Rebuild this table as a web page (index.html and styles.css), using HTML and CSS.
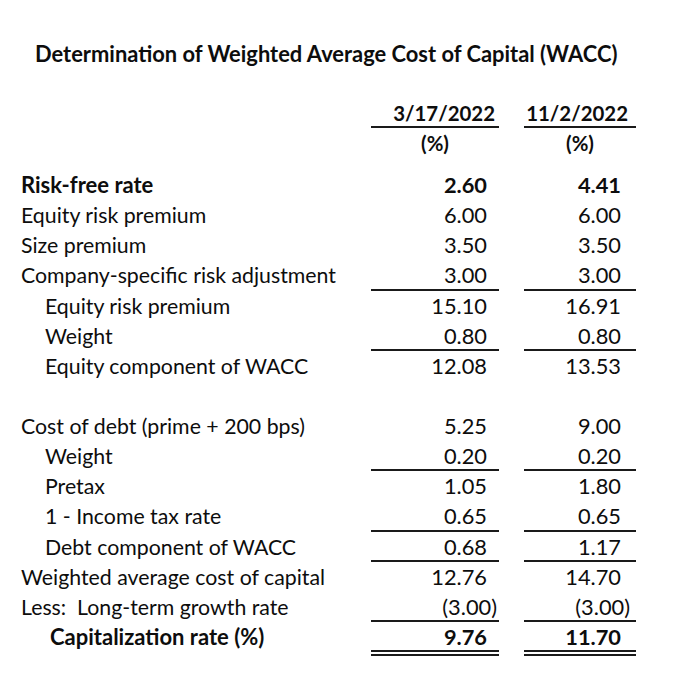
FILE: index.html
```html
<!DOCTYPE html>
<html>
<head>
<meta charset="utf-8">
<link rel="stylesheet" href="styles.css">
</head>
<body>
<div class="sheet">
  <h1 class="title">Determination of Weighted Average Cost of Capital (WACC)</h1>
  <div class="table">
    <div class="row head">
      <div class="label"></div>
      <div class="c1 date u">3/17/2022</div>
      <div class="c2 date u">11/2/2022</div>
    </div>
    <div class="row head pct">
      <div class="label"></div>
      <div class="c1 center">(%)</div>
      <div class="c2 center">(%)</div>
    </div>
    <div class="row bold">
      <div class="label">Risk-free rate</div>
      <div class="c1 num">2.60</div>
      <div class="c2 num">4.41</div>
    </div>
    <div class="row">
      <div class="label">Equity risk premium</div>
      <div class="c1 num">6.00</div>
      <div class="c2 num">6.00</div>
    </div>
    <div class="row">
      <div class="label">Size premium</div>
      <div class="c1 num">3.50</div>
      <div class="c2 num">3.50</div>
    </div>
    <div class="row">
      <div class="label">Company-specific risk adjustment</div>
      <div class="c1 num u">3.00</div>
      <div class="c2 num u">3.00</div>
    </div>
    <div class="row">
      <div class="label ind">Equity risk premium</div>
      <div class="c1 num">15.10</div>
      <div class="c2 num">16.91</div>
    </div>
    <div class="row">
      <div class="label ind">Weight</div>
      <div class="c1 num u">0.80</div>
      <div class="c2 num u">0.80</div>
    </div>
    <div class="row">
      <div class="label ind">Equity component of WACC</div>
      <div class="c1 num">12.08</div>
      <div class="c2 num">13.53</div>
    </div>
    <div class="row blank"></div>
    <div class="row">
      <div class="label">Cost of debt (prime + 200 bps)</div>
      <div class="c1 num">5.25</div>
      <div class="c2 num">9.00</div>
    </div>
    <div class="row">
      <div class="label ind">Weight</div>
      <div class="c1 num u">0.20</div>
      <div class="c2 num u">0.20</div>
    </div>
    <div class="row">
      <div class="label ind">Pretax</div>
      <div class="c1 num">1.05</div>
      <div class="c2 num">1.80</div>
    </div>
    <div class="row">
      <div class="label ind">1 - Income tax rate</div>
      <div class="c1 num u">0.65</div>
      <div class="c2 num u">0.65</div>
    </div>
    <div class="row">
      <div class="label ind">Debt component of WACC</div>
      <div class="c1 num u">0.68</div>
      <div class="c2 num u">1.17</div>
    </div>
    <div class="row">
      <div class="label">Weighted average cost of capital</div>
      <div class="c1 num">12.76</div>
      <div class="c2 num">14.70</div>
    </div>
    <div class="row">
      <div class="label">Less:&nbsp; Long-term growth rate</div>
      <div class="c1 num neg u">(3.00)</div>
      <div class="c2 num neg u">(3.00)</div>
    </div>
    <div class="row bold total">
      <div class="label ind2">Capitalization rate (%)</div>
      <div class="c1 num uu">9.76</div>
      <div class="c2 num uu">11.70</div>
    </div>
  </div>
</div>
</body>
</html>
```

FILE: styles.css
```css
html, body {
  margin: 0;
  padding: 0;
  background: #ffffff;
}

body {
  font-family: Lato, "Liberation Sans", sans-serif;
  color: #0d0d0d;
}

.sheet {
  padding-top: 39px;
}

.title {
  margin: 0;
  padding-left: 35px;
  font-size: 21.9px;
  font-weight: 700;
  line-height: 30px;
  height: 30px;
  white-space: nowrap;
}

.table {
  margin-top: 29px;
  padding-left: 21px;
}

.row {
  display: flex;
  height: 30.13px;
  line-height: 30.13px;
  font-size: 21.3px;
}

.row.head {
  height: 30px;
  line-height: 30px;
  font-weight: 700;
  font-size: 20.4px;
}

.row.pct {
  margin-bottom: 12px;
}

.bold {
  font-weight: 700;
}

.bold .label {
  font-size: 22px;
}

.label {
  width: 350px;
  flex: none;
  white-space: nowrap;
}

.label.ind {
  padding-left: 24px;
  box-sizing: border-box;
}

.label.ind2 {
  padding-left: 29px;
  box-sizing: border-box;
}

.c1, .c2 {
  flex: none;
  box-sizing: border-box;
  white-space: nowrap;
}

.c1 {
  width: 128px;
}

.c2 {
  width: 112px;
  margin-left: 25px;
}

.num {
  text-align: right;
  font-size: 21.8px;
}

.c1.num {
  padding-right: 12px;
}

.c2.num {
  padding-right: 15px;
}

.c1.neg {
  padding-right: 2px;
}

.c2.neg {
  padding-right: 6px;
}

.date {
  text-align: right;
}

.c1.date {
  padding-right: 4px;
}

.c2.date {
  padding-right: 8px;
}

.center {
  text-align: center;
}

.u {
  border-bottom: 2px solid #1a1a1a;
}

.total {
  height: 34px;
}

.uu {
  height: 34px;
  border-bottom: 6px double #1a1a1a;
}
```
